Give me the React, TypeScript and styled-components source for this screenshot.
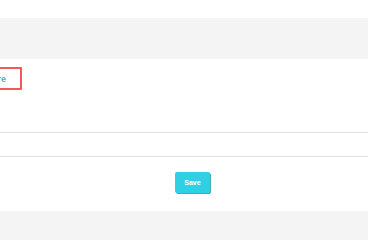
import React from "react";
import styled, { createGlobalStyle } from "styled-components";

const Global = createGlobalStyle`
  html, body { margin: 0; padding: 0; background: #ffffff; overflow: hidden; }
  body { font-family: "Liberation Sans", Arial, sans-serif; }
`;

const Page = styled.div`
  width: 368px;
  height: 240px;
  display: flex;
  flex-direction: column;
  overflow: hidden;
  & > * { flex-shrink: 0; }
`;

const TopGap = styled.div`
  height: 18px;
  background: #ffffff;
`;

const Band = styled.div<{ $h: number }>`
  height: ${(p) => p.$h}px;
  background: #f4f4f4;
`;

const Section = styled.div`
  height: 73px;
  padding-top: 8px;
  box-sizing: border-box;
  display: flex;
  align-items: flex-start;
`;

const LinkBox = styled.a`
  display: flex;
  align-items: center;
  justify-content: flex-end;
  box-sizing: border-box;
  width: 60px;
  height: 23px;
  margin-left: -38px;
  padding-right: 14px;
  border: 2px solid #f25a5a;
  border-radius: 1px;
  color: #3ab8c8;
  font-size: 9px;
  font-weight: 700;
  text-decoration: none;
  white-space: nowrap;
`;

const Rule = styled.div`
  height: 1px;
  background: #dfe1e5;
`;

const Row = styled.div`
  height: 23px;
`;

const ActionRow = styled.div`
  height: 54px;
  box-sizing: border-box;
  padding: 15px 0 0 175px;
  display: flex;
  align-items: flex-start;
`;

const SaveButton = styled.button`
  width: 35px;
  height: 21px;
  padding: 0;
  border: none;
  border-radius: 2px;
  background: #30d0e4;
  box-shadow: 1px 1px 0 #46a9b6;
  color: #ffffff;
  font-family: "Liberation Sans", Arial, sans-serif;
  font-size: 7px;
  font-weight: 700;
  cursor: pointer;
`;

export default function App() {
  return (
    <Page>
      <Global />
      <TopGap />
      <Band $h={41} />
      <Section>
        <LinkBox href="#">Explore</LinkBox>
      </Section>
      <Rule />
      <Row />
      <Rule />
      <ActionRow>
        <SaveButton>Save</SaveButton>
      </ActionRow>
      <Band $h={40} />
    </Page>
  );
}
